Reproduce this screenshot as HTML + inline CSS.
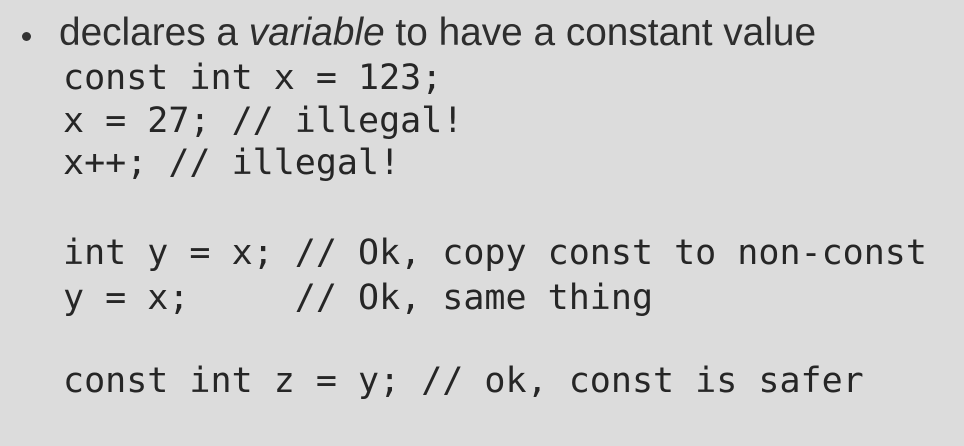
<!DOCTYPE html>
<html><head><style>
html,body{margin:0;padding:0}
body{width:964px;height:446px;background:#dcdcdc;position:relative;overflow:hidden;color:#262626}
.h{position:absolute;left:59px;font:38.8px "Liberation Sans",sans-serif;white-space:pre;line-height:1;color:#2e2e2e}
.b{position:absolute;left:22px;top:32px;width:9px;height:9px;border-radius:50%;background:#333}
.c{position:absolute;left:63px;font:35px "DejaVu Sans Mono",monospace;white-space:pre;line-height:1}
</style></head><body>
<div class="b"></div>
<div class="h" style="top:14px">declares a <i>variable</i> to have a constant value</div>
<div class="c" style="top:61px">const int x = 123;</div>
<div class="c" style="top:104px">x = 27; // illegal!</div>
<div class="c" style="top:146px">x++; // illegal!</div>
<div class="c" style="top:236px">int y = x; // Ok, copy const to non-const</div>
<div class="c" style="top:281px">y = x;     // Ok, same thing</div>
<div class="c" style="top:364px">const int z = y; // ok, const is safer</div>
</body></html>
